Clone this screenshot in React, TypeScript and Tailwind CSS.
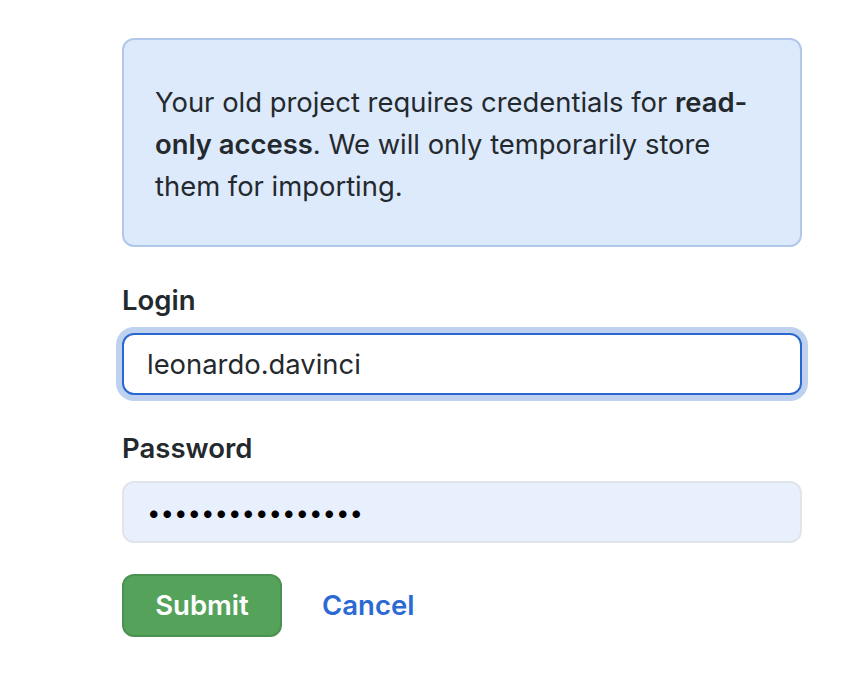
import React from "react";

export default function App() {
  return (
    <div
      className="w-[848px] h-[678px] bg-white text-[#24292e]"
      style={{ fontFamily: "Inter, 'Liberation Sans', sans-serif" }}
    >
      <div className="pl-[122px] pt-[38px] w-[802px]">
        <div className="border-2 border-[#b1c8eb] bg-[#ddeafb] rounded-[12px] pl-[31px] pr-[28px] pt-[41px] pb-[38px] text-[27.4px] leading-[42px]">
          Your old project requires credentials for <b className="font-semibold">read-only access</b>. We will only temporarily store them for importing.
        </div>
        <form className="mt-[32px] flex flex-col">
          <label className="text-[27.5px] leading-[42px] font-semibold">Login</label>
          <input
            readOnly
            value="leonardo.davinci"
            className="mt-[12px] h-[62px] w-full rounded-[12px] border-2 border-[#2a67d0] bg-white px-[23px] text-[27.4px] text-[#24292e] outline-none shadow-[0_0_0_6px_#bed2f0]"
            style={{ fontFamily: "Inter, 'Liberation Sans', sans-serif" }}
          />
          <label className="mt-[32px] text-[27.5px] leading-[42px] font-semibold">Password</label>
          <input
            readOnly
            type="password"
            value="abcdefghijklmnop"
            className="mt-[12px] h-[62px] w-full rounded-[12px] border-2 border-[#e1e4e8] bg-[#e8f0fe] px-[23px] text-[24px] text-black outline-none"
            style={{ fontFamily: "Inter, 'Liberation Sans', sans-serif" }}
          />
          <div className="mt-[31px] flex items-center gap-[40px]">
            <button
              type="button"
              className="h-[63px] w-[160px] rounded-[12px] border-2 border-[#4b9152] bg-[#55a35b] text-[27.5px] font-semibold text-white"
            >
              Submit
            </button>
            <span className="text-[27.5px] font-semibold text-[#2b6ad2]">Cancel</span>
          </div>
        </form>
      </div>
    </div>
  );
}
